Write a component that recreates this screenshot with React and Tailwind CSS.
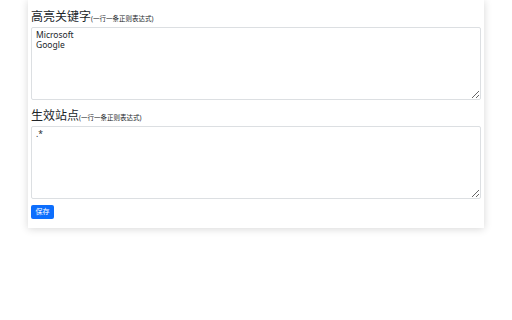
import React from 'react';

const cjk = { fontFamily: '"Noto Sans", "Noto Sans CJK SC", sans-serif' };

function Field({ title, value, className }) {
  return (
    <div className={className}>
      <div className="flex items-baseline h-[14px] leading-[14px] text-[#212529]">
        <span className="text-[12px]">{title}</span>
        <span className="text-[6.5px]">(一行一条正则表达式)</span>
      </div>
      <textarea
        defaultValue={value}
        className="mt-[3px] block w-full h-[73px] border border-[#dcdfe2] rounded-[2px] px-[4px] py-[2px] text-[8.5px] leading-[10px] text-[#212529] bg-white outline-none"
        style={cjk}
      />
    </div>
  );
}

export default function App() {
  return (
    <div className="w-[512px] h-[320px] bg-white" style={cjk}>
      <div className="ml-[28px] w-[456px] bg-white px-[3px] pt-[10px] pb-[9px] shadow-[0_1px_8px_rgba(0,0,0,0.16)]">
        <Field title="高亮关键字" value={'Microsoft\nGoogle'} />
        <Field title="生效站点" value=".*" className="mt-[9px]" />
        <button className="mt-[6px] block h-[14px] w-[23px] rounded-[2px] bg-[#0d6efd] text-white text-[7px] leading-[14px]">
          保存
        </button>
      </div>
    </div>
  );
}
